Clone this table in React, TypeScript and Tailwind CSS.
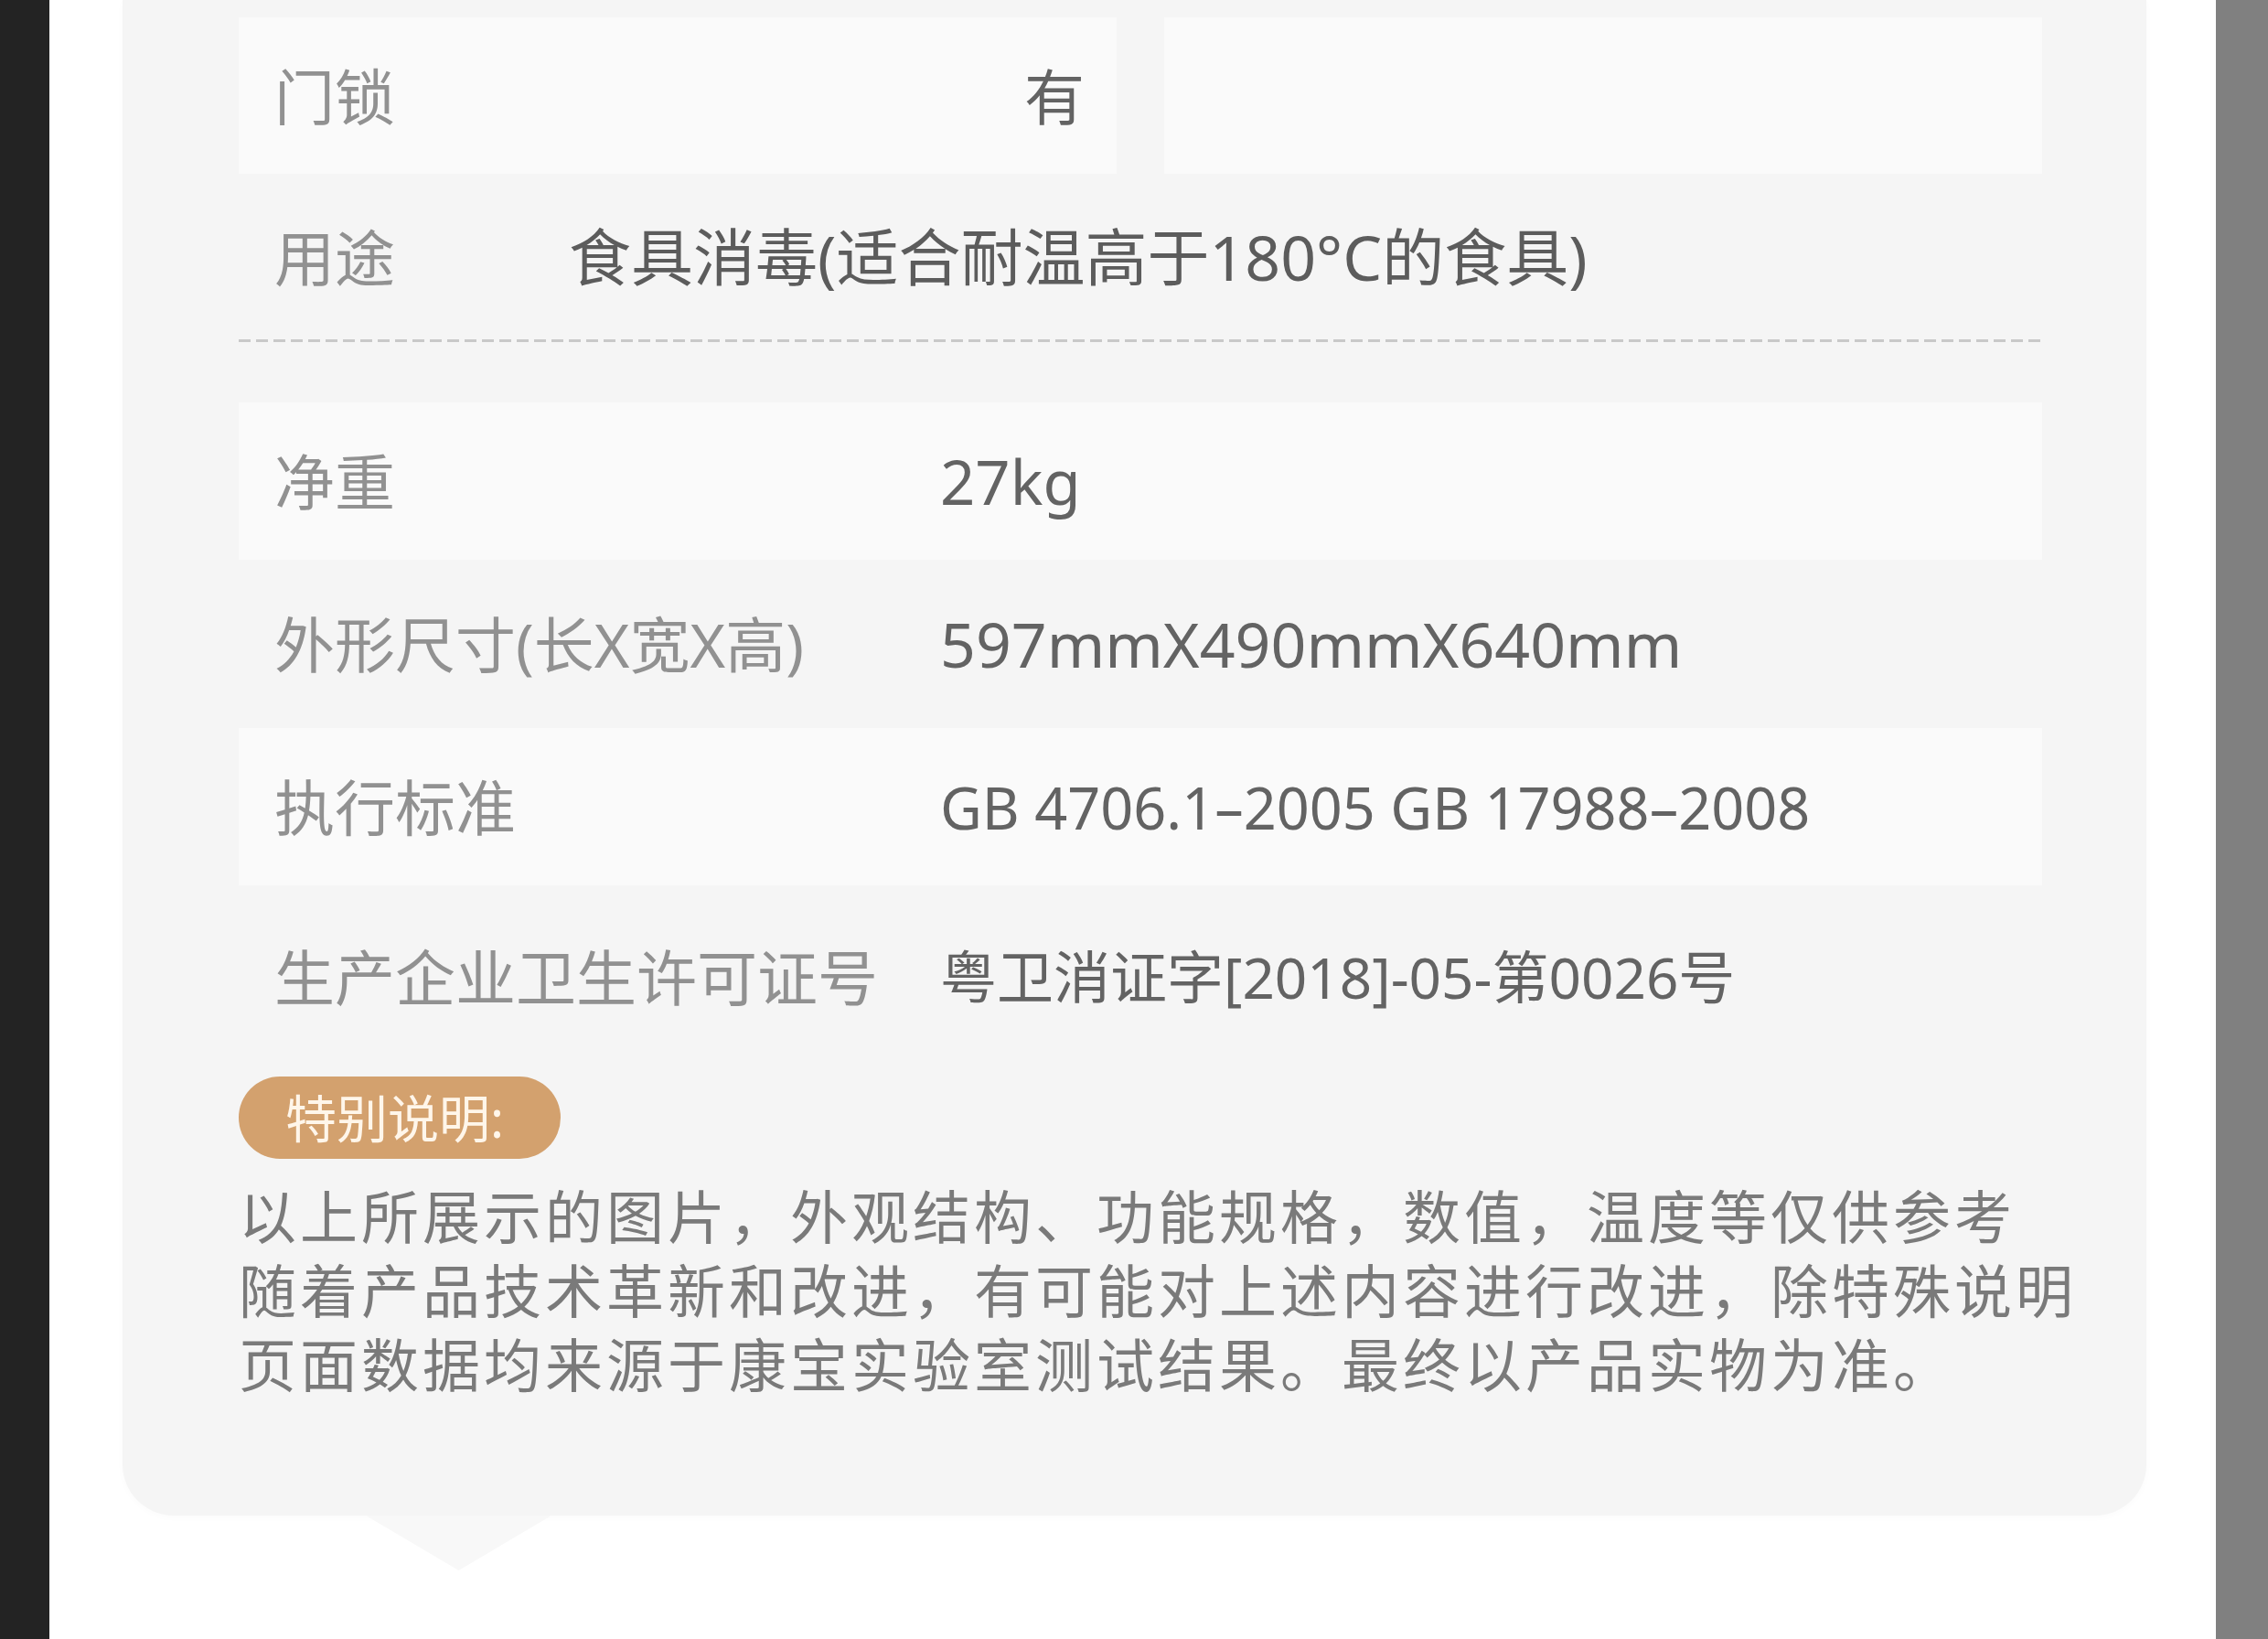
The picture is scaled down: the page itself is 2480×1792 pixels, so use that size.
import React from "react";

const font = {
  fontFamily: '"Noto Sans", "Noto Sans CJK SC", sans-serif',
};

interface SpecRowProps {
  label: string;
  value: string;
  boxed?: boolean;
  height: string;
  valueClass?: string;
}

function SpecRow({ label, value, boxed, height, valueClass }: SpecRowProps) {
  return (
    <div
      className={`flex items-center pl-[39px] ${height} ${
        boxed ? "bg-[#fafafa]" : ""
      }`}
    >
      <div className="w-[728px] shrink-0 text-[66px] leading-none text-[#919191] whitespace-nowrap">
        {label}
      </div>
      <div
        className={`leading-none text-[#636363] whitespace-nowrap ${
          valueClass ?? "text-[67px]"
        }`}
      >
        {value}
      </div>
    </div>
  );
}

export default function App() {
  return (
    <div
      className="flex h-[1792px] w-[2480px] overflow-hidden bg-white"
      style={font}
    >
      <div className="w-[54px] shrink-0 bg-[#232323]" />

      <div className="min-w-0 flex-1 pl-[80px] pr-[76px]">
        <div className="relative flex flex-col rounded-b-[56px] bg-[#f5f5f5] pb-[125px] pl-[127px] pr-[114px] pt-[19px] shadow-[0_2px_8px_rgba(0,0,0,0.02)]">
          {/* door lock + empty cell */}
          <div className="grid h-[171px] grid-cols-2 gap-[52px]">
            <div className="flex items-center justify-between bg-[#fafafa] pl-[39px] pr-[35px]">
              <span className="text-[66px] leading-none text-[#919191]">门锁</span>
              <span className="text-[66px] leading-none text-[#636363]">有</span>
            </div>
            <div className="bg-[#fafafa]" />
          </div>

          {/* usage */}
          <div className="flex h-[181px] items-center pl-[39px]">
            <div className="w-[322px] shrink-0 text-[66px] leading-none text-[#919191]">
              用途
            </div>
            <div className="text-[68px] leading-none text-[#5c5c5c] whitespace-nowrap">
              食具消毒(适合耐温高于180°C的食具)
            </div>
          </div>

          <div className="h-[3px] bg-[linear-gradient(to_right,#c9c9c9_0,#c9c9c9_13px,transparent_13px)] bg-size-[19px_3px] bg-repeat-x" />

          <div className="mt-[66px] flex flex-col">
            <SpecRow label="净重" value="27kg" boxed height="h-[172px]" />
            <SpecRow
              label="外形尺寸(长X宽X高)"
              value="597mmX490mmX640mm"
              height="h-[184px]"
              valueClass="text-[68px]"
            />
            <SpecRow
              label="执行标准"
              value="GB 4706.1–2005 GB 17988–2008"
              boxed
              height="h-[172px]"
              valueClass="text-[63px]"
            />
            <SpecRow
              label="生产企业卫生许可证号"
              value="粤卫消证字[2018]-05-第0026号"
              height="h-[200px]"
              valueClass="text-[62px]"
            />
          </div>

          {/* special note */}
          <div className="mt-[9px] flex">
            <div className="flex h-[90px] items-center rounded-full bg-[#d3a16e] pl-[51px] pr-[62px] text-[56px] leading-none text-[#fff6ea]">
              特别说明:
            </div>
          </div>
          <p className="mt-[22px] min-w-0 whitespace-nowrap text-[63px] leading-[81px] tracking-[4px] text-[#7a7a7a]">
            以上所展示的图片，外观结构、功能规格，数值，温度等仅供参考
            <br />
            随着产品技术革新和改进，有可能对上述内容进行改进，除特殊说明
            <br />
            页面数据均来源于康宝实验室测试结果。最终以产品实物为准。
          </p>

          {/* speech tail */}
          <div className="absolute left-[266px] top-full h-[60px] w-[203px] bg-[#f8f8f8] [clip-path:polygon(0_0,100%_0,50%_100%)]" />
        </div>
      </div>

      <div className="w-[57px] shrink-0 bg-[#808080]" />
    </div>
  );
}
